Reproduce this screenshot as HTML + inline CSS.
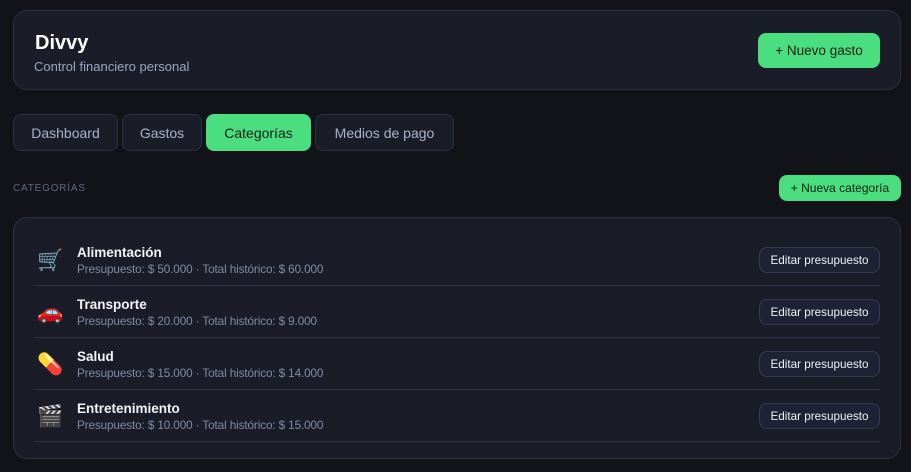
<!DOCTYPE html>
<html><head><meta charset="utf-8"><style>
*{box-sizing:border-box;margin:0;padding:0}
body{width:911px;height:472px;background:#111318;font-family:"Liberation Sans","DejaVu Sans",sans-serif;color:#e5e7eb;position:relative;overflow:hidden}
.card{position:absolute;background:#1a1d28;border:1px solid #2b3042;border-radius:14px}
.btn{position:absolute;background:#4ade80;color:#0f1f14;border-radius:8px;display:flex;align-items:center;justify-content:center}
.tab{position:absolute;top:114px;height:37px;border:1px solid #2b3042;background:#1a1d28;border-radius:8px;color:#a9b3c9;font-size:14px;display:flex;align-items:center;justify-content:center}
.row{position:absolute;left:20px;width:846px;height:52px;border-bottom:1px solid #2e3344}
.ic{position:absolute;left:3px;top:14px;font-size:21px;line-height:26px;font-family:"Noto Color Emoji","DejaVu Sans",sans-serif}
.t{position:absolute;left:43px;top:11px;font-size:13.5px;font-weight:bold;color:#f3f4f6}
.s{position:absolute;left:43px;top:29px;font-size:11.7px;color:#7f8ba6;letter-spacing:-0.1px}
.e{position:absolute;right:0;top:13px;width:121px;height:26px;border:1px solid #363b55;background:#1f2235;border-radius:8px;font-size:11.7px;color:#f0f2f8;display:flex;align-items:center;justify-content:center}
</style></head><body>
<div class="card" style="left:13px;top:10px;width:888px;height:80px">
<div style="position:absolute;left:21px;top:21px;font-size:20px;font-weight:bold;color:#fff">Divvy</div>
<div style="position:absolute;left:20px;top:48px;font-size:13px;color:#9aa6c4">Control financiero personal</div>
</div>
<div class="btn" style="left:758px;top:33px;width:122px;height:35px;font-size:13.5px">+ Nuevo gasto</div>
<div class="tab" style="left:13px;width:105px">Dashboard</div>
<div class="tab" style="left:122px;width:80px">Gastos</div>
<div class="tab" style="left:206px;width:105px;background:#4ade80;border-color:#4ade80;color:#0f1f14">Categorías</div>
<div class="tab" style="left:315px;width:139px">Medios de pago</div>
<div style="position:absolute;left:13px;top:183px;font-size:10px;letter-spacing:0.8px;color:#5f6a85">CATEGORÍAS</div>
<div class="btn" style="left:779px;top:175px;width:122px;height:26px;font-size:12px">+ Nueva categoría</div>
<div class="card" style="left:13px;top:217px;width:888px;height:242px">
<div class="row" style="top:16px"><span class="ic">🛒</span><div class="t">Alimentación</div><div class="s">Presupuesto: $ 50.000 · Total histórico: $ 60.000</div><div class="e">Editar presupuesto</div></div>
<div class="row" style="top:68px"><span class="ic">🚗</span><div class="t">Transporte</div><div class="s">Presupuesto: $ 20.000 · Total histórico: $ 9.000</div><div class="e">Editar presupuesto</div></div>
<div class="row" style="top:120px"><span class="ic">💊</span><div class="t">Salud</div><div class="s">Presupuesto: $ 15.000 · Total histórico: $ 14.000</div><div class="e">Editar presupuesto</div></div>
<div class="row" style="top:172px"><span class="ic">🎬</span><div class="t">Entretenimiento</div><div class="s">Presupuesto: $ 10.000 · Total histórico: $ 15.000</div><div class="e">Editar presupuesto</div></div>
</div>
</body></html>
